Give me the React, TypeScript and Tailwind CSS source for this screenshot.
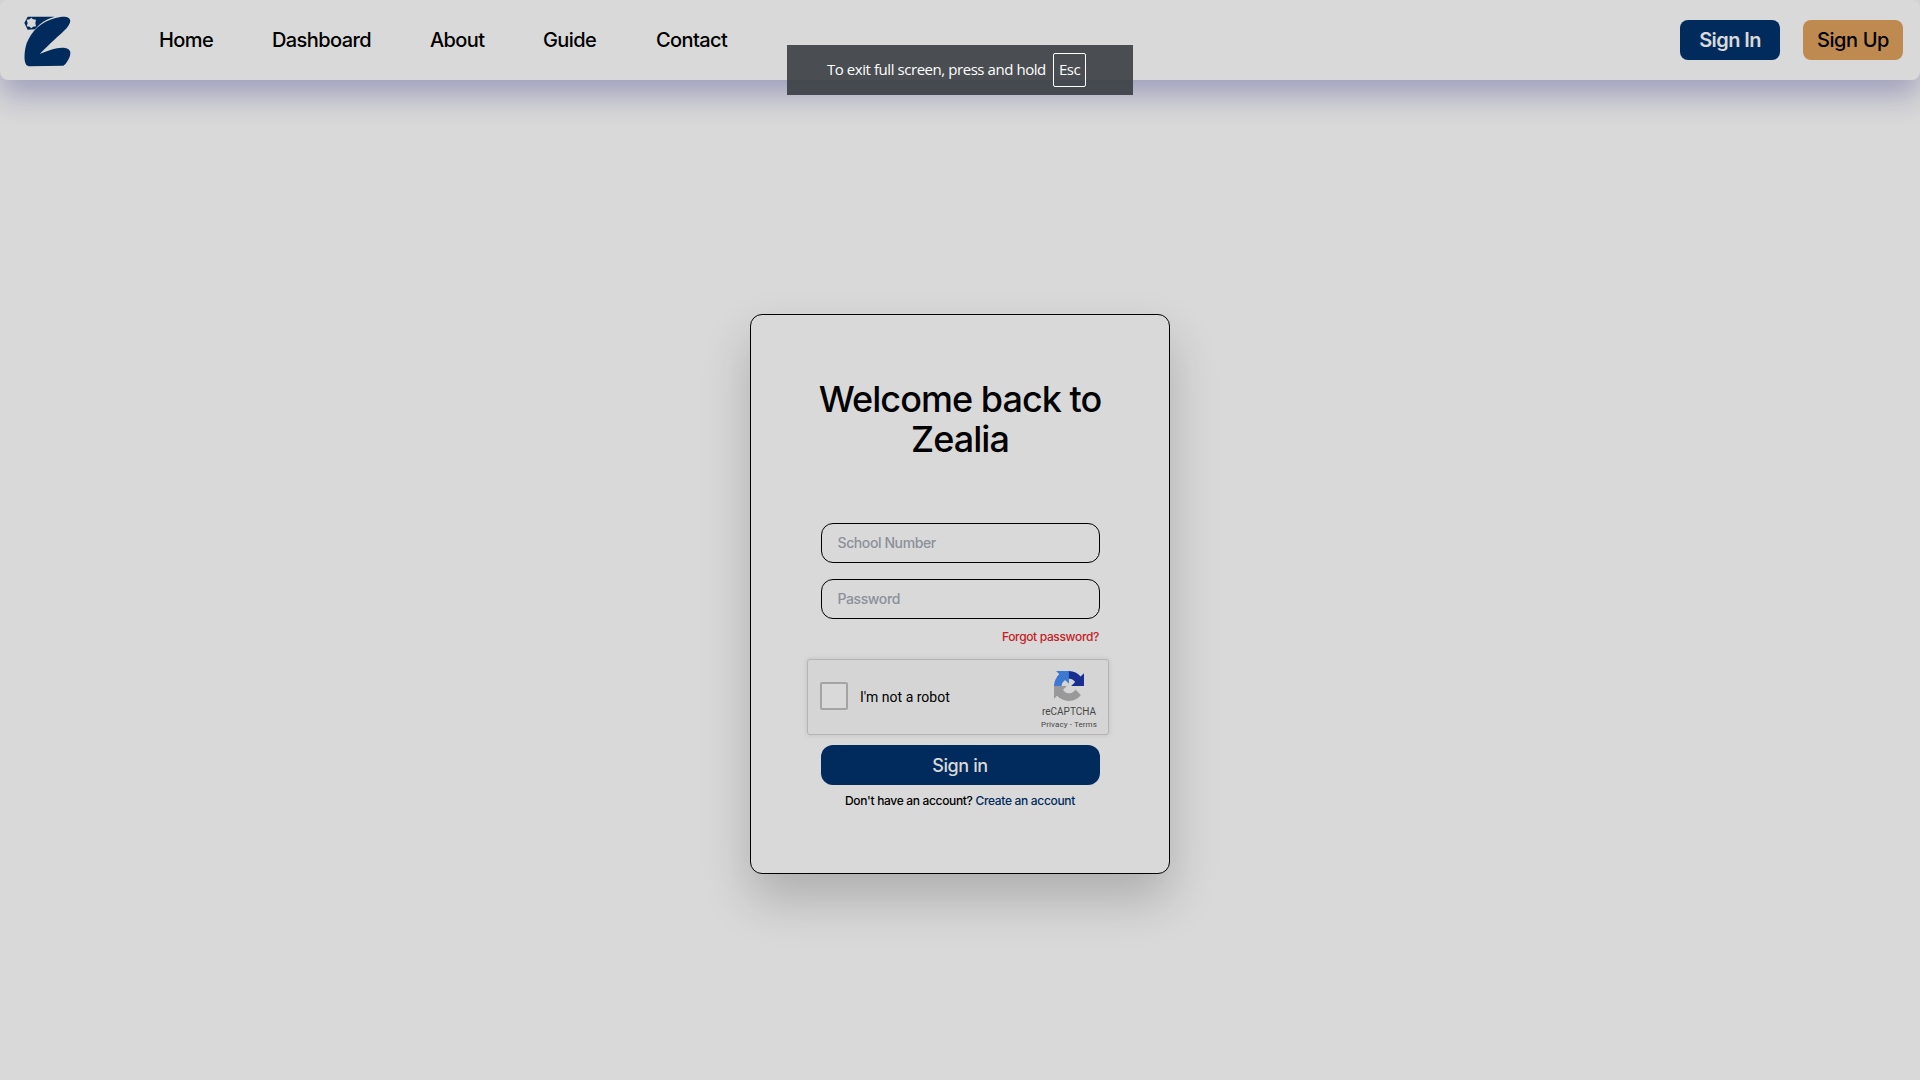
const navLinks = [
  { label: "Home", box: "w-[54px]" },
  { label: "Dashboard", box: "w-[99px]" },
  { label: "About", box: "w-[54px]" },
  { label: "Guide", box: "w-[54px]" },
  { label: "Contact", box: "w-[74px]" },
];

function Logo() {
  return (
    <svg viewBox="0 0 240 210" className="h-[70px] w-20" fill="#002b5c">
      <path d="M53 35 H134 C110 42 90 54 75 73 L53 74 L43 54 Z" />
      <path
        d="M64 38 L69 43 L78 44 L76 54 L78 64 L69 65 L64 70 L59 65 L50 64 L53 54 L50 44 L59 43 Z"
        fill="#d9d9d9"
      />
      <path d="M181 48 C179 31 158 34 139 38 C94 49 64 78 50 115 C43 136 42 163 46 174 Q48 183 56 184 L160 182 Q166 180 170 172 C176 163 182 153 181 141 C178 129 160 126 141 130 C123 134 107 140 89 147 C102 133 118 118 133 104 C151 88 179 66 181 48 Z" />
    </svg>
  );
}

function CaptchaMark() {
  return (
    <svg viewBox="0 0 64 64" className="h-[30px] w-[30px]">
      <path
        fill="#182f91"
        d="M64 31.955l-.033-1.37V4.687l-7.16 7.16C50.948 4.674 42.033.093 32.05.093c-10.4 0-19.622 4.96-25.458 12.64l11.736 11.86a15.55 15.55 0 0 1 4.754-5.334c2.05-1.6 4.952-2.906 8.968-2.906.485 0 .86.057 1.135.163 4.976.393 9.288 3.14 11.828 7.124l-8.307 8.307L64 31.953"
      />
      <path
        fill="#3d79d2"
        d="M31.862.094l-1.37.033H4.594l7.16 7.16C4.58 13.147 0 22.06 0 32.046c0 10.4 4.96 19.622 12.64 25.458L24.5 45.768a15.55 15.55 0 0 1-5.334-4.754c-1.6-2.05-2.906-4.952-2.906-8.968 0-.485.057-.86.163-1.135.393-4.976 3.14-9.288 7.124-11.828l8.307 8.307L31.86.095"
      />
      <path
        fill="#999999"
        d="M.001 32.045l.033 1.37v25.898l7.16-7.16c5.86 7.173 14.774 11.754 24.76 11.754 10.4 0 19.622-4.96 25.458-12.64l-11.736-11.86a15.55 15.55 0 0 1-4.754 5.334c-2.05 1.6-4.952 2.906-8.968 2.906-.485 0-.86-.057-1.135-.163-4.976-.393-9.288-3.14-11.828-7.124l8.307-8.307c-10.522.04-22.4.066-27.295-.005"
      />
    </svg>
  );
}

function Header() {
  return (
    <header className="flex h-20 items-center rounded-lg bg-[#d9d9d9] pr-[17px] pl-[10px] text-xl font-[450] shadow-[0_15px_30px_rgba(27,27,122,0.3)]">
      <Logo />
      <nav className="ml-[69px] flex grow gap-[59px] tracking-[-0.6px]">
        {navLinks.map((l) => (
          <a key={l.label} href="#" className={`${l.box} whitespace-nowrap`}>
            {l.label}
          </a>
        ))}
      </nav>
      <div className="flex gap-[23px]">
        <button className="h-10 w-[100px] rounded-lg bg-[#002b5c] font-semibold tracking-[-0.6px] text-[#d9d9d9]">
          Sign In
        </button>
        <button className="h-10 w-[100px] rounded-lg bg-[#bf8a50] tracking-[-0.4px]">Sign Up</button>
      </div>
    </header>
  );
}

function FullscreenHint() {
  return (
    <div className="absolute top-[45px] left-[787px] flex h-[50px] w-[346px] items-center bg-[#35393e]/87 pl-10 font-['Open_Sans',sans-serif] text-[15px] text-white">
      <span className="w-[226px] pb-0.5 tracking-[-0.44px] whitespace-nowrap">To exit full screen, press and hold</span>
      <span className="flex h-[34px] w-[33px] items-center justify-center rounded-[2px] border border-white pb-0.5 tracking-[-0.5px]">
        Esc
      </span>
    </div>
  );
}

function Captcha() {
  return (
    <div className="mt-[14px] ml-14 flex h-[76px] w-[302px] items-center rounded-[3px] border border-[#b4b4b4] bg-[#d5d5d5] pl-3 font-[Roboto,sans-serif] font-normal shadow-[0_0_4px_1px_rgba(0,0,0,0.08)]">
      <span className="mb-0.5 h-7 w-7 rounded-[2px] border-2 border-[#a4a4a4] bg-[#d9d9d9]" />
      <span className="ml-3 grow text-sm">I'm not a robot</span>
      <div className="mr-[8px] flex w-[62px] flex-col items-center pt-[7px] whitespace-nowrap text-[#474747]">
        <CaptchaMark />
        <span className="mt-1 text-[10px] leading-[14px]">reCAPTCHA</span>
        <span className="text-[8px] leading-[11px] tracking-[0.1px]">Privacy - Terms</span>
      </div>
    </div>
  );
}

function LoginCard() {
  const field =
    "mx-auto block h-10 w-[279px] rounded-xl border border-black bg-transparent px-4 pb-0.5 text-sm font-medium tracking-[-0.4px] outline-none placeholder:text-[#8b909a]";
  return (
    <form className="mx-auto mt-[234px] h-[560px] w-[420px] rounded-xl border border-black bg-[#d9d9d9] pt-16 font-medium shadow-[0_25px_50px_rgba(0,0,0,0.2)]">
      <h1 className="text-center text-4xl leading-10 font-[450] tracking-[-0.95px]">
        Welcome back to
        <br />
        Zealia
      </h1>
      <input className={`${field} mt-16`} placeholder="School Number" />
      <input className={`${field} mt-4`} type="password" placeholder="Password" />
      <div className="mx-auto mt-[10px] w-[278px] text-right text-xs leading-4 tracking-[-0.35px] text-[#c42126]">
        Forgot password?
      </div>
      <Captcha />
      <button className="mx-auto mt-[10px] block h-10 w-[279px] rounded-xl bg-[#002b5c] pt-0.5 text-lg font-medium tracking-[-0.4px] text-[#d9d9d9]">
        Sign in
      </button>
      <p className="mt-2 text-center text-xs leading-4 tracking-[-0.33px]">
        Don't have an account? <a href="#" className="text-[#002b5c]">Create an account</a>
      </p>
    </form>
  );
}

export default function App() {
  return (
    <div className="relative h-[1080px] w-[1920px] overflow-hidden bg-[#d9d9d9] font-[Inter,sans-serif] text-black">
      <Header />
      <LoginCard />
      <FullscreenHint />
    </div>
  );
}
